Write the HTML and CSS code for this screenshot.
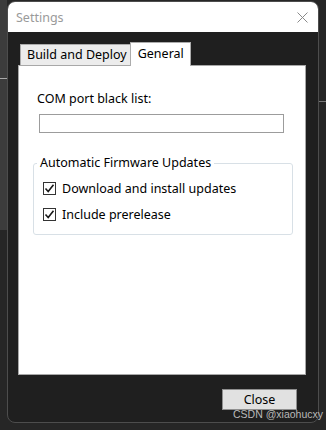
FILE: index.html
```html
<!DOCTYPE html>
<html>
<head>
  <meta charset="utf-8">
  <link rel="stylesheet" href="styles.css">
</head>
<body>
  <div class="window">
    <div class="titlebar">
      <span class="title">Settings</span>
      <svg class="close-icon" width="11" height="11" viewBox="0 0 11 11">
        <path d="M0.5 0.5 L10.5 10.5 M10.5 0.5 L0.5 10.5" stroke="#8a8a8a" stroke-width="1" fill="none"/>
      </svg>
    </div>

    <div class="dialog-body">
      <div class="tabs">
        <div class="tab">Build and Deploy</div>
        <div class="tab tab-active">General</div>
      </div>

      <div class="tab-panel">
        <div class="field-label">COM port black list:</div>
        <div class="text-input"></div>

        <fieldset class="group-box">
          <legend>Automatic Firmware Updates</legend>
          <label class="check-row">
            <span class="check-box">
              <svg width="11" height="11" viewBox="0 0 11 11">
                <path d="M1.5 5.5 L4.2 8.5 L9.5 1.8" stroke="#1a1a1a" stroke-width="1.6" fill="none"/>
              </svg>
            </span>
            Download and install updates
          </label>
          <label class="check-row">
            <span class="check-box">
              <svg width="11" height="11" viewBox="0 0 11 11">
                <path d="M1.5 5.5 L4.2 8.5 L9.5 1.8" stroke="#1a1a1a" stroke-width="1.6" fill="none"/>
              </svg>
            </span>
            Include prerelease
          </label>
        </fieldset>
      </div>

      <div class="button-row">
        <button class="close-button">Close</button>
      </div>
    </div>
  </div>

  <div class="watermark">CSDN @xiaohucxy</div>
</body>
</html>
```

FILE: styles.css
```css
body {
  margin: 0;
  width: 326px;
  height: 430px;
  overflow: hidden;
  font-family: 'Noto Sans', 'Open Sans', sans-serif;
  font-size: 12.5px;
  color: #000;
  background:
    linear-gradient(#a8a8a8, #a8a8a8) 0 78px / 7px 1px no-repeat,
    linear-gradient(#777, #777) 319px 101px / 7px 1px no-repeat,
    linear-gradient(#3c3c3c, #3c3c3c) 0 0 / 7px 230px no-repeat,
    #262626;
}

.window {
  box-sizing: border-box;
  width: 312px;
  height: 422px;
  margin: 1px 0 0 7px;
  background: #1f1f1f;
  border: 1px solid #4d4d4d;
  border-radius: 8px;
  overflow: hidden;
  display: flex;
  flex-direction: column;
}

.titlebar {
  height: 30px;
  flex-shrink: 0;
  background: #fff;
  display: flex;
  align-items: center;
  justify-content: space-between;
  padding: 0 10px 0 8px;
}

.title {
  color: #9a9a9a;
  font-size: 12.5px;
}

.dialog-body {
  flex: 1;
  display: flex;
  flex-direction: column;
  padding: 10px 12px 0 10px;
}

.tabs {
  display: flex;
  align-items: flex-end;
  padding-left: 2px;
  height: 23px;
}

.tab {
  box-sizing: border-box;
  height: 21px;
  padding: 0 4px 0 6px;
  background: #ececec;
  border: 1px solid #acacac;
  border-bottom: none;
  line-height: 19px;
}

.tab-active {
  height: 24px;
  margin-left: -2px;
  margin-bottom: -1px;
  padding: 0 6px 0 7px;
  background: #fff;
  position: relative;
  z-index: 1;
  line-height: 21px;
}

.tab-panel {
  box-sizing: border-box;
  height: 310px;
  background: #fff;
  border: 1px solid #a8a8a8;
  padding: 24px 0 0 14px;
}

.field-label {
  padding-left: 4px;
  line-height: 18px;
}

.text-input {
  box-sizing: border-box;
  width: 245px;
  height: 19px;
  margin: 6px 0 0 6px;
  border: 1px solid #9c9c9c;
}

.group-box {
  box-sizing: border-box;
  width: 260px;
  height: 80px;
  margin: 22px 0 0 0;
  padding: 4px 8px 8px 8px;
  border: 1px solid #d8e0e6;
  border-radius: 3px;
}

.group-box legend {
  padding: 0 3px;
  margin-left: -5px;
  line-height: 16px;
}

.check-row {
  display: flex;
  align-items: center;
  gap: 6px;
  height: 26px;
  padding-left: 1px;
}

.check-box {
  box-sizing: border-box;
  width: 13px;
  height: 13px;
  border: 1px solid #333;
  background: #fff;
  display: flex;
  align-items: center;
  justify-content: center;
}

.button-row {
  display: flex;
  justify-content: flex-end;
  padding: 14px 9px 0 0;
}

.close-button {
  width: 75px;
  height: 21px;
  background: #e1e1e1;
  border: 1px solid #8f8f8f;
  font-family: 'Noto Sans', 'Open Sans', sans-serif;
  font-size: 12.5px;
  color: #000;
  padding: 0;
}

.watermark {
  position: absolute;
  left: 233px;
  top: 408px;
  font-family: 'Liberation Sans', Arial, sans-serif;
  font-size: 10.5px;
  color: #b9b9b9;
}
```
